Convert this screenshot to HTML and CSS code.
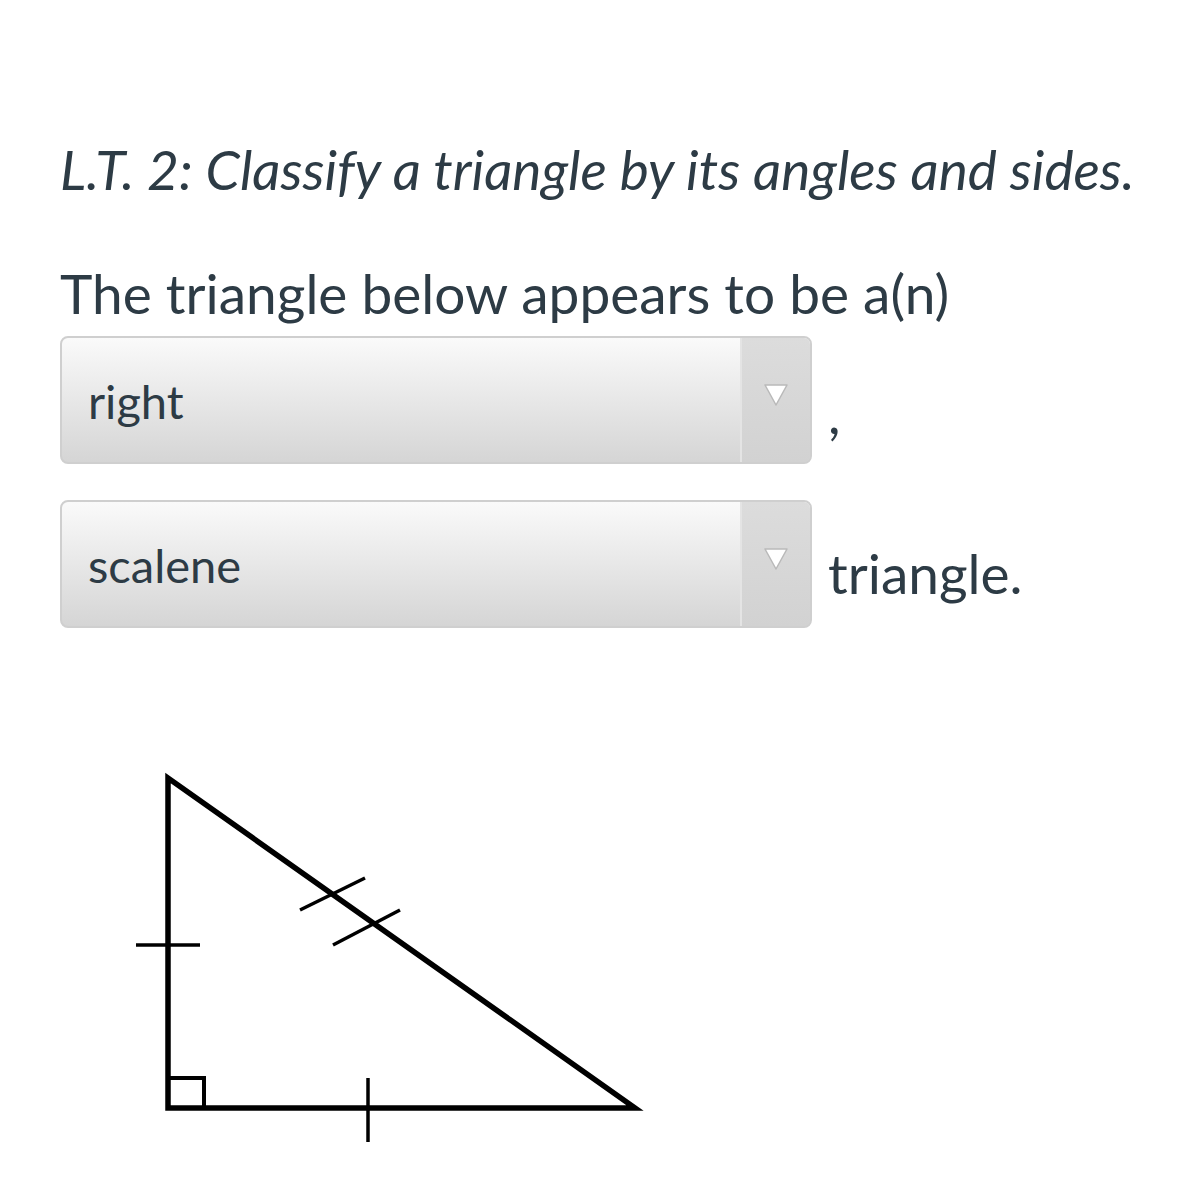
FILE: index.html
```html
<!DOCTYPE html>
<html>
<head>
<meta charset="utf-8">
<link rel="stylesheet" href="styles.css">
</head>
<body>
<main class="page">
  <h1 class="title">L.T. 2: Classify a triangle by its angles and sides.</h1>
  <p class="prompt">The triangle below appears to be a(n)</p>
  <div class="answer-row row-one">
    <div class="select">
      <span class="select-value">right</span>
      <span class="select-arrow">
        <svg width="26" height="24" viewBox="0 0 26 24"><path d="M2 2 L24 2 L13 22 Z" fill="#fff" stroke="#b9b9b9" stroke-width="1.5" stroke-linejoin="round"/></svg>
      </span>
    </div>
    <span class="after comma">,</span>
  </div>
  <div class="answer-row row-two">
    <div class="select">
      <span class="select-value">scalene</span>
      <span class="select-arrow">
        <svg width="26" height="24" viewBox="0 0 26 24"><path d="M2 2 L24 2 L13 22 Z" fill="#fff" stroke="#b9b9b9" stroke-width="1.5" stroke-linejoin="round"/></svg>
      </span>
    </div>
    <span class="after word">triangle.</span>
  </div>
  <div class="figure">
    <svg width="540" height="420" viewBox="0 0 540 420">
      <g stroke="#000" fill="none" stroke-linecap="butt">
        <path d="M48 18 L48 348 L515 348 Z" stroke-width="5.5" stroke-linejoin="miter"/>
        <path d="M48 318 L84 318 L84 348" stroke-width="4"/>
        <path d="M16 185 L80 185" stroke-width="3.5"/>
        <path d="M248 318 L248 382" stroke-width="3.5"/>
        <path d="M180 150 L245 118" stroke-width="3.5"/>
        <path d="M213 185 L280 150" stroke-width="3.5"/>
      </g>
    </svg>
  </div>
</main>
</body>
</html>
```

FILE: styles.css
```css
html, body {
  margin: 0;
  padding: 0;
  background: #ffffff;
}

.page {
  padding: 136px 0 0 60px;
  font-family: Lato, "Noto Sans", sans-serif;
  color: #2d3b45;
}

.title {
  margin: 0;
  font-size: 55px;
  font-style: italic;
  font-weight: 400;
  line-height: 66px;
  letter-spacing: 0;
}

.prompt {
  margin: 58px 0 0 0;
  font-size: 55px;
  line-height: 66px;
}

.answer-row {
  display: flex;
  align-items: flex-start;
}

.row-one {
  margin-top: 10px;
}

.row-two {
  margin-top: 36px;
}

.select {
  width: 752px;
  height: 128px;
  box-sizing: border-box;
  border: 2px solid #cfcfcf;
  border-radius: 8px;
  display: flex;
  align-items: stretch;
  background: linear-gradient(#fafafa, #d5d5d5);
  overflow: hidden;
}

.select-value {
  flex: 1;
  padding: 40px 0 0 26px;
  font-size: 47px;
  line-height: 1;
  color: #2d3b45;
}

.select-arrow {
  width: 70px;
  border-left: 2px solid #e4e4e4;
  background: linear-gradient(#dcdcdc, #d2d2d2);
  display: flex;
  justify-content: center;
  align-items: flex-start;
  padding-top: 45px;
  box-sizing: border-box;
}

.after {
  margin-left: 16px;
  font-size: 55px;
  line-height: 1;
}

.comma {
  padding-top: 50px;
}

.word {
  padding-top: 46px;
}

.figure {
  margin-top: 132px;
  margin-left: 60px;
}
```
